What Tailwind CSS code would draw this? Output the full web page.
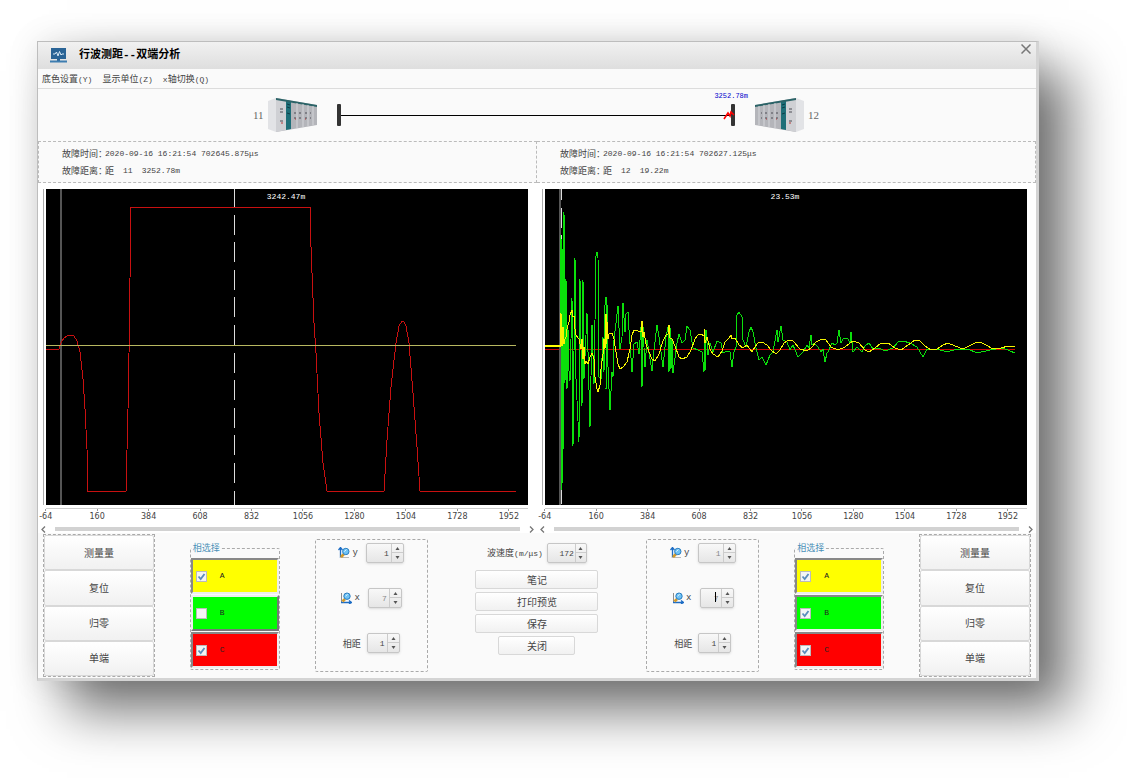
<!DOCTYPE html>
<html lang="zh-CN">
<head>
  <meta charset="UTF-8" />
  <meta name="viewport" content="width=device-width, initial-scale=1.0" />
  <title>行波测距--双端分析</title>
  <script src="https://cdn.jsdelivr.net/npm/@tailwindcss/browser@4"></script>
</head>
<body class="bg-white min-h-screen overflow-x-hidden pt-[41px] pl-[37px] pr-[88px] pb-[97px] font-['Noto_Sans_CJK_SC',sans-serif] text-[9px] leading-none text-[#444]">

  <!-- Icons -->
  <svg class="hidden">
    <symbol id="cabinet" viewBox="0 0 49 34">
      <path d="M0 3L8 0V34L0 31z" fill="#e2e3e6" />
      <path d="M8 0L49 7V27L8 34z" fill="#b4b5ba" />
      <path d="M8 0L18 2V32L8 34z" fill="#cfd0d4" />
      <path d="M18 2L23 3V31L18 32z" fill="#1e6f78" />
      <path d="M8 0L49 7V9L8 2z" fill="#2c6468" />
      <path d="M29 5V30M35 6V29M40 7V28M45 8V27" stroke="#d5d6da" stroke-width="1" />
      <path d="M12 11h3M12 14h3M12 23h3M26 15h2M26 20h2M31 15h2M31 20h2M37 15h2M37 20h2M42 15h1M42 20h1" stroke="#4c4c55" stroke-width="1" />
      <path d="M13 25h2M27 21h1M37 21h1" stroke="#b23a3a" stroke-width="1" />
      <path d="M19 6l3 1M19 9l3 1M19 15l3 1" stroke="#0c3f48" stroke-width="1" />
    </symbol>
    <symbol id="zoom-y" viewBox="0 0 12 12">
      <path d="M2.500 11V1M0.500 3L2.500 0.500L4.500 3" fill="none" stroke="#1c6cc4" stroke-width="1.300" />
      <path d="M2 10.500H11" stroke="#b9b9b9" />
      <path d="M3 10L6 7" stroke="#d39a2a" stroke-width="2.600" />
      <circle cx="7.800" cy="4.500" r="3.200" fill="#6fc3f5" stroke="#2a7dc0" />
      <path d="M6.300 4.500L8.500 2.500" stroke="#e4f6ff" />
    </symbol>
    <symbol id="zoom-x" viewBox="0 0 12 12">
      <path d="M1.500 1V10" stroke="#8d8d8d" />
      <path d="M1 10.500H11M9 8.500L11.500 10.500L9 12" fill="none" stroke="#1c6cc4" stroke-width="1.300" />
      <path d="M2.500 9.500L5 7" stroke="#d39a2a" stroke-width="2.600" />
      <circle cx="7" cy="4.200" r="3.200" fill="#6fc3f5" stroke="#2a7dc0" />
      <path d="M5.500 4.200L7.700 2.200" stroke="#e4f6ff" />
    </symbol>
    <symbol id="tick" viewBox="0 0 11 11">
      <path d="M2.500 5.500L4.700 8L8.500 3" fill="none" stroke="#5b8dbd" stroke-width="1.800" />
    </symbol>
    <symbol id="up" viewBox="0 0 5 3"><path d="M0.500 3L2.500 0L4.500 3z" fill="#555" /></symbol>
    <symbol id="down" viewBox="0 0 5 3"><path d="M0.500 0L2.500 3L4.500 0z" fill="#555" /></symbol>
    <symbol id="left" viewBox="0 0 5 7"><path d="M4 0.500L1 3.500L4 6.500" fill="none" stroke="#777" stroke-width="1.300" /></symbol>
    <symbol id="right" viewBox="0 0 5 7"><path d="M1 0.500L4 3.500L1 6.500" fill="none" stroke="#777" stroke-width="1.300" /></symbol>
  </svg>

  <div class="bg-[#fafafa] border border-[#bdbdbd] border-b-[3px] border-r-[3px] border-b-[#d4d4d4] border-r-[#d4d4d4] shadow-[30px_30px_50px_rgba(0,0,0,0.55),0_0_30px_rgba(0,0,0,0.1)]">

    <!-- Title bar -->
    <header class="flex items-center h-[27px] pl-[12px] pr-[5px] bg-linear-to-b from-[#f1f1f1] to-[#dedede]">
      <svg class="w-[17px] h-[16px] mr-[12px]" viewBox="0 0 17 16">
        <rect x="1" y="0" width="15" height="11" fill="#2a6496" />
        <path d="M3 6H5L6.500 4L8 8L9.500 3.500L11 7L12 6H14" fill="none" stroke="#d7e8f5" />
        <path d="M7 11h3v2h-3z" fill="#2a6496" />
        <path d="M0 13.500H17" stroke="#3d7db0" stroke-width="2" />
      </svg>
      <h1 class="grow text-[11px] font-bold text-black font-['Liberation_Mono','Noto_Sans_CJK_SC',monospace]">行波测距--双端分析</h1>
      <button aria-label="关闭窗口" class="self-start mt-[2px]">
        <svg class="w-[10px] h-[10px]" viewBox="0 0 10 10"><path d="M0.500 0.500L9.500 9.500M9.500 0.500L0.500 9.500" stroke="#777" stroke-width="1.500" /></svg>
      </button>
    </header>

    <!-- Menu -->
    <nav class="flex items-center gap-[10px] h-[20px] pl-[4px] border-b border-[#dcdcdc]">
      <button>底色设置<span class="font-['Liberation_Mono',monospace] text-[8px]">(Y)</span></button>
      <button>显示单位<span class="font-['Liberation_Mono',monospace] text-[8px]">(Z)</span></button>
      <button><span class="font-['Liberation_Mono',monospace] text-[8px]">x</span>轴切换<span class="font-['Liberation_Mono',monospace] text-[8px]">(Q)</span></button>
    </nav>

    <!-- Line between both ends -->
    <section class="flex items-center justify-center h-[52px] pr-[2px] font-['Liberation_Serif',serif] text-[11px] text-[#666]">
      <span>11</span>
      <svg class="w-[49px] h-[34px] ml-[4px] mr-[20px]"><use href="#cabinet" /></svg>
      <div class="relative flex items-center justify-between w-[40%]">
        <div class="w-[4px] h-[22px] rounded-[1px] bg-[#333]"></div>
        <div class="grow h-px bg-black"></div>
        <div class="w-[4px] h-[22px] rounded-[1px] bg-[#333]"></div>
        <svg class="absolute right-0 top-[6px] w-[12px] h-[11px]" viewBox="0 0 12 11"><path d="M1 9L5 3L7 6L8 2L11 5" fill="none" stroke="#f00" stroke-width="1.600" /></svg>
        <span class="absolute -right-[13px] -top-[11px] font-['Liberation_Mono',monospace] text-[7px] text-[#00c]">3252.78m</span>
      </div>
      <svg class="w-[49px] h-[34px] ml-[20px] mr-[4px]" viewBox="0 0 49 34"><use href="#cabinet" width="49" height="34" transform="translate(49 0) scale(-1 1)" /></svg>
      <span>12</span>
    </section>

    <!-- Fault info -->
    <section class="grid grid-cols-2 h-[42px] whitespace-nowrap">
      <dl class="flex flex-col justify-center gap-[8px] pl-[23px] border border-dashed border-[#bbb]">
        <div class="flex items-center"><dt class="w-[43px]">故障时间：</dt><dd class="font-['Liberation_Mono',monospace] text-[8px]">2020-09-16 16:21:54 702645.875μs</dd></div>
        <div class="flex items-center"><dt class="w-[43px]">故障距离：</dt><dd class="flex items-center">距<span class="ml-[9px] font-['Liberation_Mono',monospace] text-[8px]">11</span><span class="ml-[9px] font-['Liberation_Mono',monospace] text-[8px]">3252.78m</span></dd></div>
      </dl>
      <dl class="flex flex-col justify-center gap-[8px] pl-[23px] border border-l-0 border-dashed border-[#bbb]">
        <div class="flex items-center"><dt class="w-[43px]">故障时间：</dt><dd class="font-['Liberation_Mono',monospace] text-[8px]">2020-09-16 16:21:54 702627.125μs</dd></div>
        <div class="flex items-center"><dt class="w-[43px]">故障距离：</dt><dd class="flex items-center">距<span class="ml-[9px] font-['Liberation_Mono',monospace] text-[8px]">12</span><span class="ml-[9px] font-['Liberation_Mono',monospace] text-[8px]">19.22m</span></dd></div>
      </dl>
    </section>

    <!-- Waveforms -->
    <section class="grid grid-cols-2 bg-white pt-[6px]">
      <figure>
        <div class="relative ml-[5px] mr-[9px] pl-[2px] border-l border-[#aaa]">
          <svg class="block w-full h-[316px] bg-black" viewBox="0 0 482 316" preserveAspectRatio="none" fill="none" shape-rendering="crispEdges">
            <path d="M14.500 0V316" stroke="#555" stroke-width="2" />
            <path d="M188.500 0V316" stroke="#ddd" stroke-dasharray="20 7.600" stroke-dashoffset="2" />
            <polyline stroke="#c81010" points="0,160 13,160 15,154 18,149 21,147 24,146 28,147 31,152 34,163 37,190 39,220 41,260 42,302 80,302 82,220 83,165 84,90 85,18 264,18 265,58 268,134 270,164 273,224 277,274 281,302 338,302 341,251 345,198 350,154 353,137 356,132 358,133 360,137 363,154 367,204 371,258 374,302 470,302" />
            <path d="M0 156.500H470" stroke="#b8b860" />
          </svg>
          <span class="absolute top-[4px] left-1/2 -translate-x-1/2 font-['Liberation_Mono',monospace] text-[8px] text-white">3242.47m</span>
        </div>
        <div class="mt-[3px] ml-[8px] mr-[9px] border-t border-[#ccc] font-['DejaVu_Sans',sans-serif] text-[8px]">
          <div class="flex -ml-[26px] h-[16px] text-center *:w-[10.13%] *:shrink-0 *:before:content-[''] *:before:block *:before:w-px *:before:h-[2px] *:before:mx-auto *:before:mb-[2px] *:before:bg-[#999]">
            <span>-64</span><span>160</span><span>384</span><span>608</span><span>832</span><span>1056</span><span>1280</span><span>1504</span><span>1728</span><span>1952</span>
          </div>
        </div>
        <div class="flex items-center h-[8px] px-[3px]">
          <svg class="w-[5px] h-[7px]"><use href="#left" /></svg>
          <div class="grow h-[4px] mx-[9px] bg-[#d2d2d2]"></div>
          <svg class="w-[5px] h-[7px]"><use href="#right" /></svg>
        </div>
      </figure>

      <figure>
        <div class="relative ml-[5px] mr-[9px] pl-[2px] border-l border-[#aaa]">
          <svg class="block w-full h-[316px] bg-black" viewBox="0 0 482 316" preserveAspectRatio="none" fill="none" shape-rendering="crispEdges">
            <path d="M0 160.500H470" stroke="#c00" />
            <path d="M15 0V316" stroke="#555" stroke-width="2" />
            <path d="M16.500 0V316" stroke="#ddd" stroke-dasharray="20 7.600" stroke-dashoffset="9" />
            <polyline stroke="#0be00b" points="15,157 16,46 17,301 18,60 18,260 19,23 20,194 21,90 22,200 23,140 24,182 25,192 26,150 27,109 28,257 30,69 31,190 34,253 35,90 36,160 37,217 38,91 39,190 42,124 45,238 47,136 49,195 51,67 52,63 53,69 54,188 56,190 58,148 59,183 60,116 61,108 61,200 62,115 63,178 65,221 67,183 68,188 69,151 71,134 73,117 75,160 77,148 78,114 80,143 81,125 83,123 84,141 87,183 89,155 92,153 94,165 96,138 97,198 98,138 100,178 102,151 107,182 109,161 112,136 114,148 118,178 121,148 123,138 124,183 125,138 126,180 127,150 128,184 132,154 134,145 137,154 140,151 142,137 145,141 148,159 153,161 157,163 159,183 160,150 160,181 161,141 163,166 165,154 168,163 172,152 176,154 178,164 182,162 185,163 187,178 189,163 191,158 192,126 194,123 197,128 198,151 201,158 204,143 206,138 208,143 211,159 214,171 217,168 221,176 225,166 228,163 232,141 233,153 236,137 238,151 242,153 245,161 248,156 253,168 258,163 262,156 264,159 266,146 267,156 269,154 273,158 276,163 278,160 280,173 282,164 283,163 287,154 290,156 292,154 294,141 296,154 298,150 300,149 303,150 305,154 306,143 308,163 312,158 317,163 320,157 324,154 328,160 334,159 340,162 348,159 353,153 358,152 365,154 372,158 378,168 382,160 392,160 402,163 412,160 423,160 432,164 445,161 458,159 465,162 470,164" />
            <path d="M0 157H16" stroke="#ff0" stroke-width="2" />
            <polyline stroke="#f5f500" points="15,157 16,124 17,157 18,138 19,155 20,150 21,148 22,140 24,133 25,126 27,121 28,128 29,127 30,140 31,146 34,150 36,160 37,150 38,170 39,158 40,175 41,172 43,175 45,168 47,164 49,170 50,188 52,200 53,203 55,196 56,180 58,165 59,150 60,160 61,125 61,155 62,133 63,150 64,145 67,144 69,150 71,163 73,175 75,180 78,178 82,173 85,160 87,146 89,141 93,142 96,143 97,132 98,148 99,143 101,155 104,163 107,170 110,172 114,165 118,152 121,146 123,145 124,136 125,149 127,150 130,157 134,168 137,170 142,168 146,161 150,150 153,146 156,145 159,147 159,140 160,154 162,148 165,160 168,165 173,168 177,162 180,153 184,149 186,146 187,150 190,149 194,156 198,159 202,156 207,163 210,158 213,154 217,153 222,156 226,161 231,165 235,161 239,154 244,151 248,152 255,160 262,162 267,158 271,153 277,150 281,151 286,158 293,161 300,158 308,152 314,154 320,161 324,163 330,159 336,154 343,154 350,159 356,161 363,156 370,151 375,152 380,157 386,161 392,160 398,156 403,154 410,157 418,160 424,157 430,154 435,153 441,156 448,160 456,159 463,157 470,157" />
          </svg>
          <span class="absolute top-[4px] left-1/2 -translate-x-1/2 font-['Liberation_Mono',monospace] text-[8px] text-white">23.53m</span>
        </div>
        <div class="mt-[3px] ml-[8px] mr-[9px] border-t border-[#ccc] font-['DejaVu_Sans',sans-serif] text-[8px]">
          <div class="flex -ml-[26px] h-[16px] text-center *:w-[10.13%] *:shrink-0 *:before:content-[''] *:before:block *:before:w-px *:before:h-[2px] *:before:mx-auto *:before:mb-[2px] *:before:bg-[#999]">
            <span>-64</span><span>160</span><span>384</span><span>608</span><span>832</span><span>1056</span><span>1280</span><span>1504</span><span>1728</span><span>1952</span>
          </div>
        </div>
        <div class="flex items-center h-[8px] px-[3px]">
          <svg class="w-[5px] h-[7px]"><use href="#left" /></svg>
          <div class="grow h-[4px] mx-[9px] bg-[#d2d2d2]"></div>
          <svg class="w-[5px] h-[7px]"><use href="#right" /></svg>
        </div>
      </figure>
    </section>

    <!-- Controls -->
    <section class="flex items-start justify-between h-[145px] px-[5px] pt-px text-[10px]">

      <div class="grid grid-rows-4 w-[112px] h-[143px] border border-dashed border-[#aaa] *:border *:border-[#d8d8d8] *:rounded-[2px] *:bg-linear-to-b *:from-white *:to-[#f1f1f1]">
        <button>测量量</button>
        <button>复位</button>
        <button>归零</button>
        <button>单端</button>
      </div>

      <fieldset class="w-[90px] h-[128px] mt-[8px] border border-dashed border-[#aaa] rounded-[2px]">
        <legend class="ml-px px-px text-[9px] leading-[12px] text-[#4a90b8]">相选择</legend>
        <div class="flex flex-col gap-px mt-[4px] font-['Liberation_Mono',monospace] text-[8px] text-[#222]">
          <label class="relative flex items-center gap-[13px] h-[36px] pl-[3px] bg-[#ff0] border-2 border-t-[#888] border-l-[#888] border-r-[#eee] border-b-[#eee]">
            <input type="checkbox" checked class="peer appearance-none w-[11px] h-[11px] bg-[#f4f4f4] border border-[#bbb]" />
            <svg class="absolute left-[3px] w-[11px] h-[11px] invisible peer-checked:visible"><use href="#tick" /></svg>A
          </label>
          <label class="relative flex items-center gap-[13px] h-[36px] pl-[3px] bg-[#0f0] border-2 border-t-[#eee] border-l-[#eee] border-r-[#777] border-b-[#777]">
            <input type="checkbox" class="peer appearance-none w-[11px] h-[11px] bg-[#f4f4f4] border border-[#bbb]" />
            <svg class="absolute left-[3px] w-[11px] h-[11px] invisible peer-checked:visible"><use href="#tick" /></svg>B
          </label>
          <label class="relative flex items-center gap-[13px] h-[36px] pl-[3px] bg-[#f00] border-2 border-t-[#888] border-l-[#888] border-r-[#eee] border-b-[#eee]">
            <input type="checkbox" checked class="peer appearance-none w-[11px] h-[11px] bg-[#f4f4f4] border border-[#bbb]" />
            <svg class="absolute left-[3px] w-[11px] h-[11px] invisible peer-checked:visible"><use href="#tick" /></svg>C
          </label>
        </div>
      </fieldset>

      <div class="flex flex-col items-center justify-between w-[113px] h-[133px] mt-[5px] pt-[3px] pb-[18px] border border-dashed border-[#aaa] rounded-[2px] text-[9px]">
        <div class="flex items-center">
          <svg class="w-[12px] h-[12px] mr-[2px]"><use href="#zoom-y" /></svg>
          <label for="ly" class="mr-[8px] font-['Liberation_Mono',monospace]">y</label>
          <div class="flex h-[20px] border border-[#c6c6c6] rounded-[2px] bg-linear-to-b from-[#f8f8f8] to-[#e6e6e6] shadow-sm">
            <input id="ly" type="text" value="1" class="w-[24px] pr-[2px] text-right font-['Liberation_Mono',monospace] text-[8px] outline-none" />
            <div class="grid grid-rows-2 w-[12px] border-l border-[#ccc] divide-y divide-[#ccc]">
              <button aria-label="增加" class="grid place-items-center"><svg class="w-[5px] h-[3px]"><use href="#up" /></svg></button>
              <button aria-label="减少" class="grid place-items-center"><svg class="w-[5px] h-[3px]"><use href="#down" /></svg></button>
            </div>
          </div>
        </div>
        <div class="flex items-center">
          <svg class="w-[12px] h-[12px] mr-[2px]"><use href="#zoom-x" /></svg>
          <label for="lx" class="mr-[8px] font-['Liberation_Mono',monospace]">x</label>
          <div class="flex h-[20px] border border-[#c6c6c6] rounded-[2px] bg-linear-to-b from-[#f8f8f8] to-[#e6e6e6] shadow-sm">
            <input id="lx" type="text" value="7" class="w-[20px] pr-[2px] text-right font-['Liberation_Mono',monospace] text-[8px] outline-none text-[#888]" />
            <div class="grid grid-rows-2 w-[12px] border-l border-[#ccc] divide-y divide-[#ccc]">
              <button aria-label="增加" class="grid place-items-center"><svg class="w-[5px] h-[3px]"><use href="#up" /></svg></button>
              <button aria-label="减少" class="grid place-items-center"><svg class="w-[5px] h-[3px]"><use href="#down" /></svg></button>
            </div>
          </div>
        </div>
        <div class="flex items-center">
          <label for="ld" class="mr-[6px]">相距</label>
          <div class="flex h-[20px] border border-[#c6c6c6] rounded-[2px] bg-linear-to-b from-[#f8f8f8] to-[#e6e6e6] shadow-sm">
            <input id="ld" type="text" value="1" class="w-[19px] pr-[2px] text-right font-['Liberation_Mono',monospace] text-[8px] outline-none" />
            <div class="grid grid-rows-2 w-[12px] border-l border-[#ccc] divide-y divide-[#ccc]">
              <button aria-label="增加" class="grid place-items-center"><svg class="w-[5px] h-[3px]"><use href="#up" /></svg></button>
              <button aria-label="减少" class="grid place-items-center"><svg class="w-[5px] h-[3px]"><use href="#down" /></svg></button>
            </div>
          </div>
        </div>
      </div>

      <div class="flex flex-col items-center gap-[3px] w-[123px] mx-[13px] mt-[9px]">
        <div class="flex items-center mb-[4px]">
          <label for="speed" class="mr-[4px] text-[9px]">波速度<span class="font-['Liberation_Mono',monospace] text-[8px]">(m/μs)</span></label>
          <div class="flex h-[20px] border border-[#c6c6c6] rounded-[2px] bg-linear-to-b from-[#f8f8f8] to-[#e6e6e6] shadow-sm">
            <input id="speed" type="text" value="172" class="w-[27px] pr-px text-right font-['Liberation_Mono',monospace] text-[8px] outline-none" />
            <div class="grid grid-rows-2 w-[11px] border-l border-[#ccc] divide-y divide-[#ccc]">
              <button aria-label="增加" class="grid place-items-center"><svg class="w-[5px] h-[3px]"><use href="#up" /></svg></button>
              <button aria-label="减少" class="grid place-items-center"><svg class="w-[5px] h-[3px]"><use href="#down" /></svg></button>
            </div>
          </div>
        </div>
        <button class="w-full h-[19px] border border-[#d8d8d8] rounded-[2px] bg-linear-to-b from-white to-[#f1f1f1]">笔记</button>
        <button class="w-full h-[19px] border border-[#d8d8d8] rounded-[2px] bg-linear-to-b from-white to-[#f1f1f1]">打印预览</button>
        <button class="w-full h-[19px] border border-[#d8d8d8] rounded-[2px] bg-linear-to-b from-white to-[#f1f1f1]">保存</button>
        <button class="w-[77px] h-[19px] border border-[#d8d8d8] rounded-[2px] bg-linear-to-b from-white to-[#f1f1f1]">关闭</button>
      </div>

      <div class="flex flex-col items-center justify-between w-[113px] h-[133px] mt-[5px] pt-[3px] pb-[18px] border border-dashed border-[#aaa] rounded-[2px] text-[9px]">
        <div class="flex items-center">
          <svg class="w-[12px] h-[12px] mr-[2px]"><use href="#zoom-y" /></svg>
          <label for="ry" class="mr-[8px] font-['Liberation_Mono',monospace]">y</label>
          <div class="flex h-[20px] border border-[#c6c6c6] rounded-[2px] bg-linear-to-b from-[#f8f8f8] to-[#e6e6e6] shadow-sm">
            <input id="ry" type="text" value="1" class="w-[24px] pr-[2px] text-right font-['Liberation_Mono',monospace] text-[8px] outline-none text-[#888]" />
            <div class="grid grid-rows-2 w-[12px] border-l border-[#ccc] divide-y divide-[#ccc]">
              <button aria-label="增加" class="grid place-items-center"><svg class="w-[5px] h-[3px]"><use href="#up" /></svg></button>
              <button aria-label="减少" class="grid place-items-center"><svg class="w-[5px] h-[3px]"><use href="#down" /></svg></button>
            </div>
          </div>
        </div>
        <div class="flex items-center">
          <svg class="w-[12px] h-[12px] mr-[2px]"><use href="#zoom-x" /></svg>
          <label for="rx" class="mr-[8px] font-['Liberation_Mono',monospace]">x</label>
          <div class="relative flex h-[20px] border border-[#c6c6c6] rounded-[2px] bg-linear-to-b from-[#f8f8f8] to-[#e6e6e6] shadow-sm">
            <input id="rx" type="text" value="7" class="w-[20px] pr-[2px] text-right font-['Liberation_Mono',monospace] text-[8px] outline-none text-[#888]" />
            <i class="absolute left-[14px] top-[3px] w-px h-[10px] bg-black"></i>
            <div class="grid grid-rows-2 w-[12px] border-l border-[#ccc] divide-y divide-[#ccc]">
              <button aria-label="增加" class="grid place-items-center"><svg class="w-[5px] h-[3px]"><use href="#up" /></svg></button>
              <button aria-label="减少" class="grid place-items-center"><svg class="w-[5px] h-[3px]"><use href="#down" /></svg></button>
            </div>
          </div>
        </div>
        <div class="flex items-center">
          <label for="rd" class="mr-[6px]">相距</label>
          <div class="flex h-[20px] border border-[#c6c6c6] rounded-[2px] bg-linear-to-b from-[#f8f8f8] to-[#e6e6e6] shadow-sm">
            <input id="rd" type="text" value="1" class="w-[19px] pr-[2px] text-right font-['Liberation_Mono',monospace] text-[8px] outline-none" />
            <div class="grid grid-rows-2 w-[12px] border-l border-[#ccc] divide-y divide-[#ccc]">
              <button aria-label="增加" class="grid place-items-center"><svg class="w-[5px] h-[3px]"><use href="#up" /></svg></button>
              <button aria-label="减少" class="grid place-items-center"><svg class="w-[5px] h-[3px]"><use href="#down" /></svg></button>
            </div>
          </div>
        </div>
      </div>

      <fieldset class="w-[90px] h-[128px] mt-[8px] border border-dashed border-[#aaa] rounded-[2px]">
        <legend class="ml-px px-px text-[9px] leading-[12px] text-[#4a90b8]">相选择</legend>
        <div class="flex flex-col gap-px mt-[4px] font-['Liberation_Mono',monospace] text-[8px] text-[#222]">
          <label class="relative flex items-center gap-[13px] h-[36px] pl-[3px] bg-[#ff0] border-2 border-t-[#888] border-l-[#888] border-r-[#eee] border-b-[#eee]">
            <input type="checkbox" checked class="peer appearance-none w-[11px] h-[11px] bg-[#f4f4f4] border border-[#bbb]" />
            <svg class="absolute left-[3px] w-[11px] h-[11px] invisible peer-checked:visible"><use href="#tick" /></svg>A
          </label>
          <label class="relative flex items-center gap-[13px] h-[36px] pl-[3px] bg-[#0f0] border-2 border-t-[#888] border-l-[#888] border-r-[#eee] border-b-[#eee]">
            <input type="checkbox" checked class="peer appearance-none w-[11px] h-[11px] bg-[#f4f4f4] border border-[#bbb]" />
            <svg class="absolute left-[3px] w-[11px] h-[11px] invisible peer-checked:visible"><use href="#tick" /></svg>B
          </label>
          <label class="relative flex items-center gap-[13px] h-[36px] pl-[3px] bg-[#f00] border-2 border-t-[#888] border-l-[#888] border-r-[#eee] border-b-[#eee]">
            <input type="checkbox" checked class="peer appearance-none w-[11px] h-[11px] bg-[#f4f4f4] border border-[#bbb]" />
            <svg class="absolute left-[3px] w-[11px] h-[11px] invisible peer-checked:visible"><use href="#tick" /></svg>C
          </label>
        </div>
      </fieldset>

      <div class="grid grid-rows-4 w-[112px] h-[143px] border border-dashed border-[#aaa] *:border *:border-[#d8d8d8] *:rounded-[2px] *:bg-linear-to-b *:from-white *:to-[#f1f1f1]">
        <button>测量量</button>
        <button>复位</button>
        <button>归零</button>
        <button>单端</button>
      </div>
    </section>
  </div>
</body>
</html>
